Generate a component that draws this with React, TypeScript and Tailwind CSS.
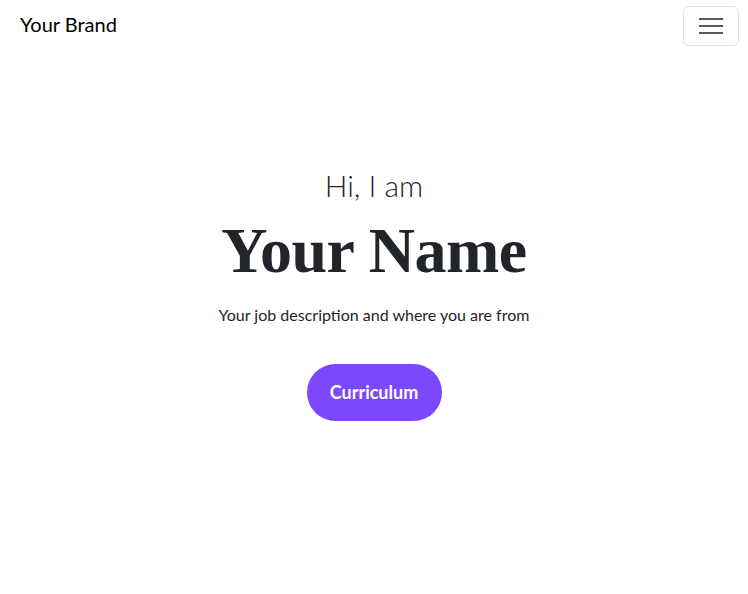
import React from "react";

export default function App() {
  return (
    <div className="min-h-[594px] bg-white text-[#212529] font-[Lato,'Noto_Sans',sans-serif]">
      <nav className="flex items-start justify-between pl-5 pr-[9px] pt-[6px]">
        <span className="text-[20px] leading-[37px] text-black">Your Brand</span>
        <button className="w-[56px] h-[40px] border border-[#dee2e6] rounded-[6px] flex items-center justify-center">
          <svg width="24" height="22" viewBox="0 0 24 22">
            <path d="M0 4h24M0 11h24M0 18h24" stroke="#555b61" strokeWidth="2" />
          </svg>
        </button>
      </nav>
      <main className="flex flex-col items-center pt-[121px]">
        <p className="text-[30px] leading-[36px] font-light">Hi, I am</p>
        <h1 className="mt-[8px] text-[64px] leading-[80px] font-bold tracking-[-0.5px] font-['Liberation_Serif',serif]">Your Name</h1>
        <p className="mt-[12px] text-[16px] leading-[24px]">Your job description and where you are from</p>
        <button className="mt-[37px] w-[135px] h-[57px] rounded-full bg-[#7b47ff] text-white text-[18px] font-bold">Curriculum</button>
      </main>
    </div>
  );
}
